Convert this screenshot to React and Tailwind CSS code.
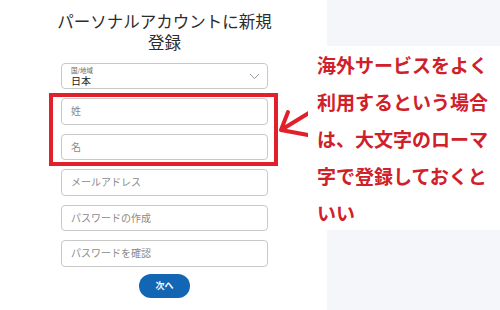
import React from "react";

const jp = { fontFamily: '"Noto Sans CJK JP", "Noto Sans", sans-serif' };

function Field({ placeholder }) {
  return (
    <div className="h-[26.5px] rounded-[4px] border border-[#c9c9c9] bg-white flex items-center pl-[9px]">
      <span className="text-[10px] text-[#8a8a8a] leading-none">{placeholder}</span>
    </div>
  );
}

export default function App() {
  return (
    <div className="relative w-[500px] h-[310px] flex overflow-hidden" style={jp}>
      {/* form side */}
      <div className="w-[327px] h-full bg-white">
        <div className="ml-[61px] w-[207px] flex flex-col">
          <h1 className="mt-[11px] text-center text-[16.5px] leading-[21px] font-normal text-[#2c2c2c] whitespace-nowrap -mx-[10px]">
            <span className="block">パーソナルアカウントに新規</span>
            <span className="block">登録</span>
          </h1>

          <div className="mt-[10px] flex flex-col gap-[9px]">
            <div className="h-[26px] rounded-[4px] border border-[#c9c9c9] bg-white flex items-center justify-between pl-[9px] pr-[7px]">
              <div className="flex flex-col">
                <span className="text-[6.5px] leading-[9px] text-[#666]">国/地域</span>
                <span className="text-[10px] leading-[12px] text-[#222]">日本</span>
              </div>
              <svg width="11" height="7" viewBox="0 0 11 7" fill="none">
                <path d="M1 1l4.5 4.5L10 1" stroke="#9a9a9a" strokeWidth="1" />
              </svg>
            </div>
            <Field placeholder="姓" />
            <Field placeholder="名" />
            <Field placeholder="メールアドレス" />
            <Field placeholder="パスワードの作成" />
            <Field placeholder="パスワードを確認" />
          </div>

          <div className="mt-[7px] flex justify-center">
            <button className="w-[51px] h-[24px] rounded-full bg-[#1366b3] text-white text-[9px] font-bold leading-none">
              次へ
            </button>
          </div>
        </div>
      </div>
      <div className="flex-1 h-full bg-[#f5f6fa]" />

      {/* annotation overlay */}
      <div className="absolute left-[49px] top-[93px] w-[229px] h-[73px] border-[4px] border-[#e0202a]" />
      <svg className="absolute left-0 top-0" width="500" height="310" viewBox="0 0 500 310" fill="none">
        <path
          d="M317 108L281 130M281 130L288 112M281 130L308 135"
          stroke="#e0202a"
          strokeWidth="4"
          strokeLinecap="round"
          strokeLinejoin="round"
        />
      </svg>
      <div className="absolute left-[308px] top-[46px] w-[192px] h-[184px] bg-white pl-[9px]">
        <p className="text-[19px] leading-[37px] font-bold text-[#d0202a] whitespace-nowrap">
          海外サービスをよく
          <br />
          利用するという場合
          <br />
          は、大文字のローマ
          <br />
          字で登録しておくと
          <br />
          いい
        </p>
      </div>
    </div>
  );
}
